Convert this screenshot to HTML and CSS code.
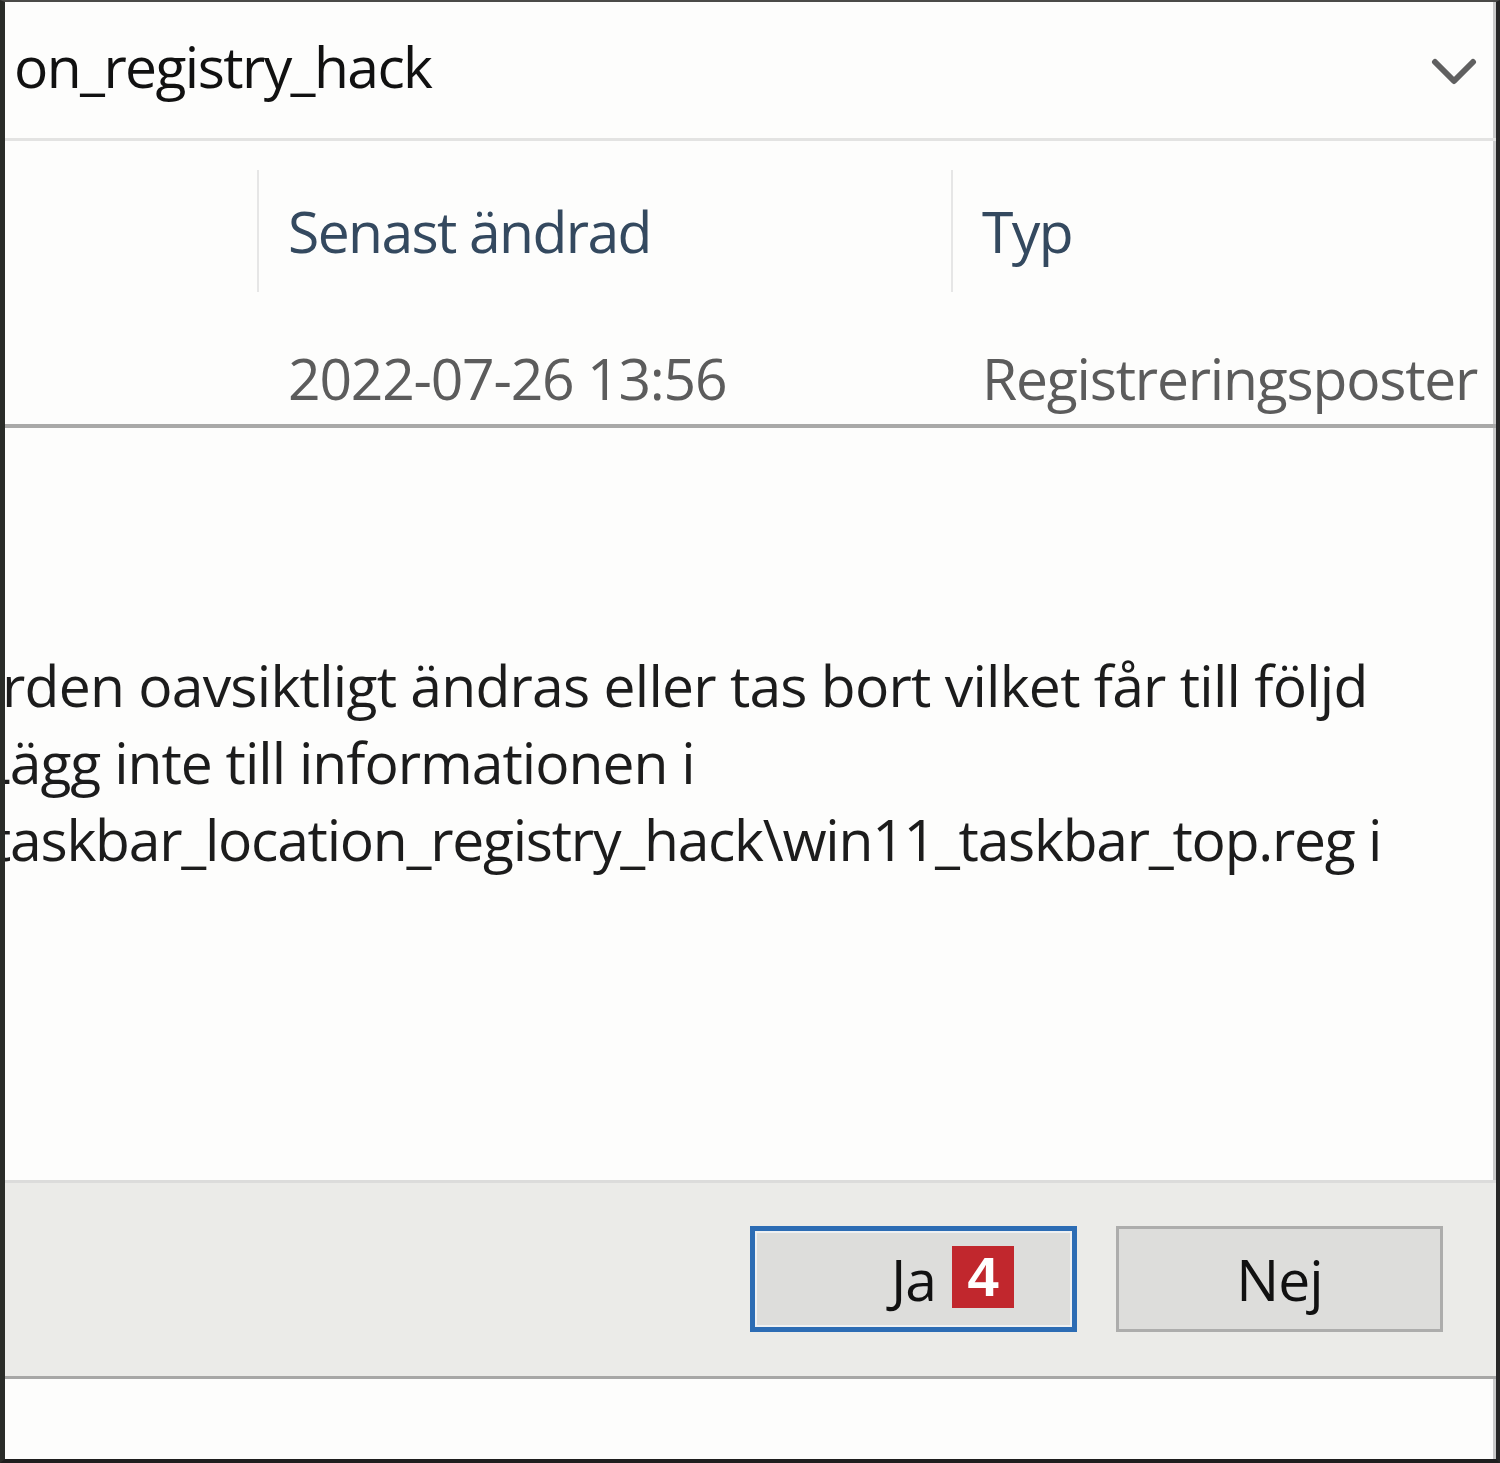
FILE: index.html
```html
<!DOCTYPE html>
<html lang="sv">
<head>
<meta charset="utf-8">
<title>Registereditorn</title>
<link rel="stylesheet" href="styles.css">
</head>
<body>
<div class="frame">
  <div class="combo">
    <span class="combo-text">on_registry_hack</span>
    <svg class="chevron" width="46" height="30" viewBox="0 0 46 30" aria-hidden="true">
      <polyline points="4,5 23,24 42,5" fill="none" stroke="#606060" stroke-width="6" stroke-linecap="round" stroke-linejoin="round"/>
    </svg>
  </div>
  <div class="list">
    <div class="row header-row">
      <div class="cell cell-name"></div>
      <div class="cell cell-date sep">Senast ändrad</div>
      <div class="cell cell-type sep">Typ</div>
    </div>
    <div class="row data-row">
      <div class="cell cell-name"></div>
      <div class="cell cell-date">2022-07-26 13:56</div>
      <div class="cell cell-type">Registreringsposter</div>
    </div>
  </div>
  <div class="message">
    <div class="line line-1">rden oavsiktligt ändras eller tas bort vilket får till följd</div>
    <div class="line line-2">Lägg inte till informationen i</div>
    <div class="line line-3">taskbar_location_registry_hack\win11_taskbar_top.reg i</div>
  </div>
  <div class="footer">
    <button class="btn btn-default" type="button">Ja<span class="badge">4</span></button>
    <button class="btn" type="button">Nej</button>
  </div>
  <div class="bottom"></div>
</div>
</body>
</html>
```
FILE: styles.css
```css
* { box-sizing: border-box; }
html, body { margin: 0; padding: 0; background: #fdfdfc; }
body {
  font-family: "Open Sans", "Noto Sans", "Liberation Sans", sans-serif;
  font-size: 57px;
  line-height: 76px;
  letter-spacing: -1px;
  color: #1a1a1a;
}
.frame {
  width: 1500px;
  height: 1463px;
  border-top: 2px solid #4a4a48;
  border-left: 5px solid #2a2c28;
  border-right: 4px solid #262626;
  border-bottom: 4px solid #1e1e1e;
  background: #fdfdfc;
  display: flex;
  flex-direction: column;
  overflow: hidden;
  box-shadow: inset -3px 0 0 #c8c8c8;
}
.combo {
  height: 139px;
  flex: none;
  border-bottom: 3px solid #e3e3e2;
  display: flex;
  align-items: flex-start;
  justify-content: space-between;
  padding: 26px 19px 0 9px;
  letter-spacing: -1.6px;
}
.combo-text { color: #111; }
.chevron { margin-top: 29px; }
.list {
  flex: none;
  height: 287px;
  padding-top: 29px;
  border-bottom: 4px solid #a9a9a8;
}
.row {
  display: grid;
  grid-template-columns: 252px 694px 1fr;
}
.header-row { height: 122px; letter-spacing: -1.6px; }
.cell {
  white-space: nowrap;
  padding-left: 31px;
  overflow: hidden;
}
.header-row .cell {
  padding-top: 23px;
  color: #34495f;
}
.sep { border-left: 2px solid #e6e6e6; padding-left: 29px; }
.data-row { padding-top: 48px; color: #5c5c5c; letter-spacing: -1.2px; }
.message {
  flex: none;
  height: 752px;
  padding-top: 219px;
  overflow: hidden;
  color: #1c1c1c;
}
.line { white-space: nowrap; height: 77px; line-height: 77px; }
.line-1 { text-indent: -3px; letter-spacing: -0.75px; }
.line-2 { text-indent: -24px; }
.line-3 { text-indent: -14px; letter-spacing: -1.25px; }
.footer {
  flex: none;
  height: 199px;
  background: #ebebe8;
  border-top: 3px solid #dcdcdb;
  border-bottom: 3px solid #a7a7a6;
  display: flex;
  justify-content: flex-end;
  align-items: flex-start;
  gap: 39px;
  padding: 43px 53px 0 0;
}
.btn {
  position: relative;
  width: 327px;
  height: 106px;
  font: inherit;
  letter-spacing: -1px;
  color: #111;
  background: #dddddb;
  border: 3px solid #adadac;
  padding: 0;
  line-height: 96px;
}
.btn-default {
  border: 5px solid #2c6cb4;
  box-shadow: inset 0 0 0 2px #eef0f2;
}
.badge {
  position: absolute;
  left: 197px;
  top: 15px;
  width: 62px;
  height: 62px;
  background: #c1272d;
  color: #fff;
  font-family: "Liberation Sans", Arial, sans-serif;
  font-weight: bold;
  font-size: 56px;
  line-height: 62px;
  letter-spacing: 0;
  text-align: center;
}
.bottom { flex: 1; }
```
